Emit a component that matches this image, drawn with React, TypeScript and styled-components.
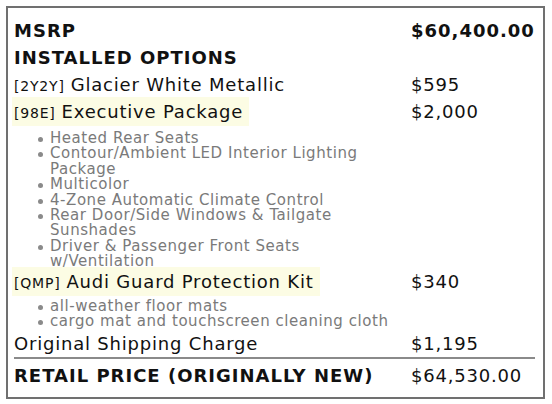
import React from 'react';
import styled, { createGlobalStyle } from 'styled-components';

const GlobalStyle = createGlobalStyle`
  html, body {
    margin: 0;
    padding: 0;
    background: #ffffff;
    font-family: "DejaVu Sans", "Liberation Sans", sans-serif;
  }
`;

const Page = styled.div`
  width: 552px;
  height: 404px;
  padding: 6px 7px 6px 6px;
  box-sizing: border-box;
`;

const Card = styled.div`
  border: 2px solid #707070;
  padding: 9px 10px 8px 6px;
  display: grid;
  grid-template-columns: 397px 1fr;
  align-items: start;
  color: #111;
`;

const Label = styled.div<{ $bold?: boolean }>`
  font-size: 18px;
  font-weight: ${p => (p.$bold ? 700 : 400)};
  letter-spacing: ${p => (p.$bold ? '1px' : '0.8px')};
  line-height: 27px;
  height: 27px;
  white-space: nowrap;
`;

const Price = styled(Label)``;

const Mark = styled.span<{ $hl?: boolean }>`
  background: ${p => (p.$hl ? '#fcfce4' : 'transparent')};
  padding: 4px 6px 4px 2px;
  margin-left: -2px;
`;

const Code = styled.span`
  font-size: 14px;
  margin-right: 6px;
`;

const Bullets = styled.ul<{ $top: number; $bottom: number }>`
  grid-column: 1 / 2;
  width: 348px;
  margin: ${p => p.$top}px 0 ${p => p.$bottom}px;
  padding: 0 0 0 36px;
  list-style: none;
`;

const Bullet = styled.li`
  position: relative;
  font-size: 15px;
  letter-spacing: 0.55px;
  line-height: 15.4px;
  color: #7a7a7a;
  &::before {
    content: '';
    position: absolute;
    left: -12px;
    top: 6px;
    width: 5px;
    height: 5px;
    border-radius: 50%;
    background: #8a8a8a;
  }
`;

const Spacer = styled.div``;

const Rule = styled.div`
  grid-column: 1 / 3;
  height: 2px;
  background: #8a8a8a;
  margin: 0 0 3px;
`;

type Option = {
  code: string;
  name: string;
  price: string;
  hl?: boolean;
  items?: string[];
  top?: number;
  bottom?: number;
};

const options: Option[] = [
  { code: '[2Y2Y]', name: 'Glacier White Metallic', price: '$595' },
  {
    code: '[98E]',
    name: 'Executive Package',
    price: '$2,000',
    hl: true,
    top: 6,
    bottom: -2,
    items: [
      'Heated Rear Seats',
      'Contour/Ambient LED Interior Lighting Package',
      'Multicolor',
      '4-Zone Automatic Climate Control',
      'Rear Door/Side Windows & Tailgate Sunshades',
      'Driver & Passenger Front Seats w/Ventilation',
    ],
  },
  {
    code: '[QMP]',
    name: 'Audi Guard Protection Kit',
    price: '$340',
    hl: true,
    top: 4,
    bottom: 1,
    items: ['all-weather floor mats', 'cargo mat and touchscreen cleaning cloth'],
  },
];

export default function App() {
  return (
    <>
      <GlobalStyle />
      <Page>
        <Card>
          <Label $bold>MSRP</Label>
          <Price $bold>$60,400.00</Price>
          <Label $bold>INSTALLED OPTIONS</Label>
          <Spacer />
          {options.map(o => (
            <React.Fragment key={o.code}>
              <Label>
                <Mark $hl={o.hl}>
                  <Code>{o.code}</Code>
                  {o.name}
                </Mark>
              </Label>
              <Price>{o.price}</Price>
              {o.items && (
                <>
                  <Bullets $top={o.top ?? 0} $bottom={o.bottom ?? 0}>
                    {o.items.map(i => (
                      <Bullet key={i}>{i}</Bullet>
                    ))}
                  </Bullets>
                  <Spacer />
                </>
              )}
            </React.Fragment>
          ))}
          <Label>Original Shipping Charge</Label>
          <Price>$1,195</Price>
          <Rule />
          <Label $bold>RETAIL PRICE (ORIGINALLY NEW)</Label>
          <Price>$64,530.00</Price>
        </Card>
      </Page>
    </>
  );
}
